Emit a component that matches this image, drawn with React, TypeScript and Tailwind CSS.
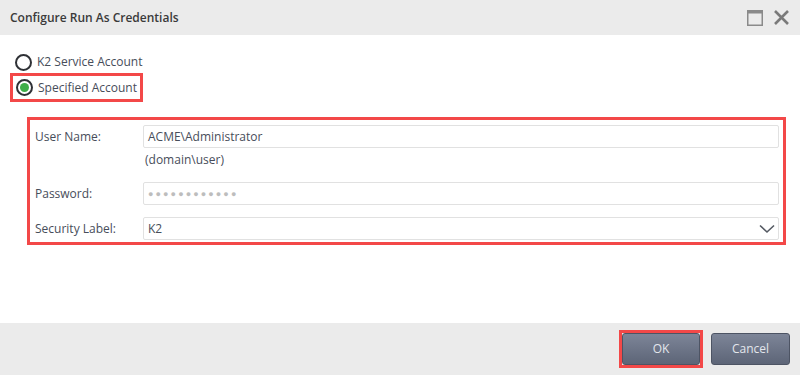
import React from "react";

function Radio({ checked }: { checked?: boolean }) {
  return (
    <span className="w-[17px] h-[17px] rounded-full border-[2px] border-[#2f3136] flex items-center justify-center bg-white shrink-0">
      {checked && <span className="w-[9px] h-[9px] rounded-full bg-[#3fae49]" />}
    </span>
  );
}

export default function App() {
  const font = { fontFamily: '"Open Sans", "Liberation Sans", sans-serif' };
  return (
    <div className="w-[800px] h-[375px] flex flex-col bg-white overflow-hidden" style={font}>
      {/* Header */}
      <div className="h-[35px] bg-[#ebebeb] flex items-center pl-[10px] pr-[10px] shrink-0">
        <div className="text-[12px] font-semibold text-[#3a3a3a] flex-1">Configure Run As Credentials</div>
        <div className="flex items-center gap-[10px]">
          <svg width="16" height="16" viewBox="0 0 16 16">
            <rect x="0.75" y="0.75" width="14.5" height="14.5" fill="none" stroke="#8a8a8a" strokeWidth="1.5" />
            <rect x="0" y="0" width="16" height="3.5" fill="#8a8a8a" />
          </svg>
          <svg width="17" height="17" viewBox="0 0 17 17">
            <path d="M2 2 L15 15 M15 2 L2 15" stroke="#7a7a7a" strokeWidth="2.6" strokeLinecap="butt" />
          </svg>
        </div>
      </div>

      {/* Body */}
      <div className="flex-1 flex flex-col text-[12px] text-[#474d5a]">
        <div className="mt-[18px] ml-[15px] flex items-center gap-[5px] h-[18px]">
          <Radio />
          <span>K2 Service Account</span>
        </div>
        <div className="mt-[2px] ml-[10px] self-start border-[3px] border-[#f34848] flex items-center gap-[5px] pl-[3px] pr-[3px] h-[29px]">
          <Radio checked />
          <span>Specified Account</span>
        </div>

        <div className="mt-[15px] ml-[27px] w-[759px] border-[3px] border-[#f34848] pl-[5px] pr-[4px] pt-[5px] pb-[2px] grid grid-cols-[108px_1fr]">
          <div className="h-[23px] flex items-center">User Name:</div>
          <div className="h-[23px] border border-[#e1e1e1] rounded-[2px] flex items-center px-[4px] text-[#474d5a]">
            ACME\Administrator
          </div>

          <div className="h-[34px]" />
          <div className="h-[34px] pt-[3px] pl-[2px] leading-[18px]">(domain\user)</div>

          <div className="h-[23px] flex items-center">Password:</div>
          <div className="h-[23px] border border-[#e1e1e1] rounded-[2px] flex items-center px-[4px] text-[#bdbdbd] text-[9px] tracking-[2.1px]">
            ●●●●●●●●●●●●
          </div>

          <div className="h-[12px]" />
          <div className="h-[12px]" />

          <div className="h-[23px] flex items-center">Security Label:</div>
          <div className="h-[23px] border border-[#e1e1e1] rounded-[2px] flex items-center pl-[4px] pr-[3px]">
            <span className="flex-1">K2</span>
            <svg width="16" height="10" viewBox="0 0 16 10">
              <path d="M1 1.5 L8 8 L15 1.5" fill="none" stroke="#555a63" strokeWidth="1.6" />
            </svg>
          </div>
        </div>
      </div>

      {/* Footer */}
      <div className="h-[52px] bg-[#ebebeb] flex items-center justify-end pr-[10px] gap-[8px] shrink-0 pb-[1px]">
        <div className="border-[3px] border-[#f34848]">
          <button className="w-[78px] h-[32px] rounded-[3px] border border-[#4d5464] bg-gradient-to-b from-[#7d8598] to-[#5d6577] text-[#e3e6ec] text-[12px] flex items-center justify-center">
            OK
          </button>
        </div>
        <button className="w-[79px] h-[32px] rounded-[3px] border border-[#4d5464] bg-gradient-to-b from-[#7d8598] to-[#5d6577] text-[#e3e6ec] text-[12px] flex items-center justify-center">
          Cancel
        </button>
      </div>
    </div>
  );
}
